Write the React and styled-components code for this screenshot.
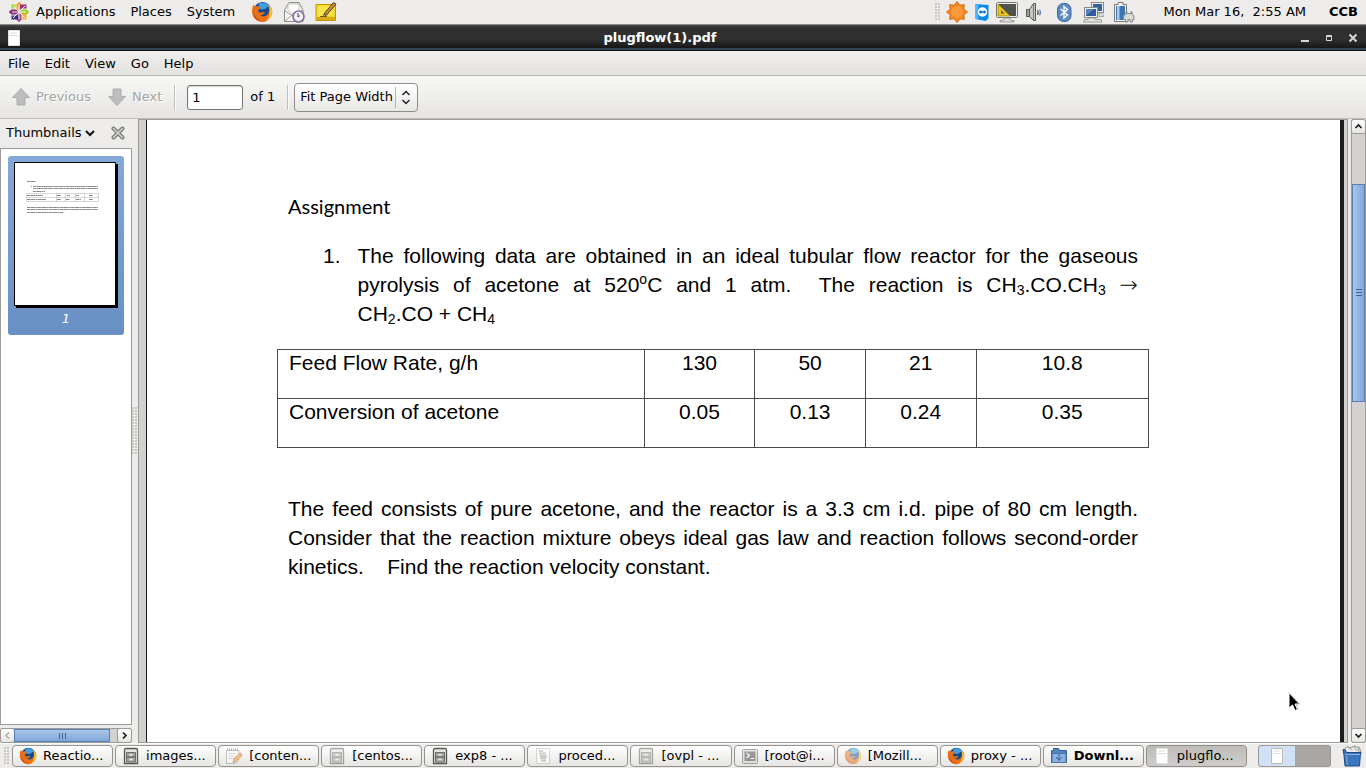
import React from "react";
import styled, { createGlobalStyle, css } from "styled-components";

const GlobalStyle = createGlobalStyle`
  *, *::before, *::after { box-sizing: border-box; }
  body {
    margin: 0;
    background: #edeceb;
    color: #000;
    font: 13px/16px "DejaVu Sans", sans-serif;
  }
  button, input, select { font: inherit; color: inherit; }
  svg { display: block; flex: none; }
`;

const Desktop = styled.div`
  position: relative;
  display: flex;
  flex-direction: column;
  height: 100vh;
  overflow: hidden;
`;

const plainButton = css`
  margin: 0;
  padding: 0;
  border: 0;
  background: none;
  white-space: nowrap;
`;

/* ---------- top panel ---------- */
const Panel = styled.header`
  display: flex;
  align-items: center;
  height: 25px;
  padding: 0 8px;
  background: #edeceb;
  border-bottom: 1px solid #8b8a86;
`;
const PanelMenu = styled.nav`
  display: flex;
  align-items: center;
  gap: 15px;
  margin: 0 16px 0 6px;
`;
const PanelButton = styled.button`
  ${plainButton}
`;
const IconRow = styled.div`
  display: flex;
  align-items: center;
  gap: ${(p) => p.$gap}px;
`;
const Tray = styled(IconRow)`
  margin-left: auto;
`;
const Clock = styled.time`
  margin: 0 23px 0 28px;
  white-space: pre;
`;
const UserName = styled.strong`
  font-weight: bold;
`;
const Grip = styled.span`
  flex: none;
  width: 6px;
  height: 18px;
  background-image: radial-gradient(circle at 1px 1px, #bcbab7 0, #bcbab7 1px, transparent 1px);
  background-size: 3px 3px;
  opacity: 0.75;
`;

/* ---------- window frame ---------- */
const TitleBar = styled.div`
  display: flex;
  align-items: center;
  height: 26px;
  padding: 0 6px 0 8px;
  background: linear-gradient(#4a4a49 0, #303030 3px, #303030 14px, #171717 23px, #56708f 24px, #0f1114 25px);
  color: #fff;
`;
const Title = styled.h1`
  flex: 1;
  margin: 0;
  font-size: 13px;
  line-height: 16px;
  text-align: center;
`;
const WindowButtons = styled.div`
  display: flex;
  gap: 12px;
`;
const WindowButton = styled.button`
  ${plainButton}
  width: 12px;
  height: 12px;
`;
const MenuBar = styled.nav`
  display: flex;
  align-items: center;
  gap: 15px;
  height: 25px;
  padding: 2px 8px 0;
  background: linear-gradient(#efeeed, #e3e2e0);
  border-bottom: 1px solid #bab8b5;
`;
const ToolBar = styled.div`
  display: flex;
  align-items: center;
  height: 43px;
  padding: 0 11px;
  background: linear-gradient(#f8f8f7, #e5e4e2);
  border-bottom: 1px solid #bfbdba;
`;
const NavButtons = styled.div`
  display: flex;
  gap: 16px;
  margin-right: 12px;
`;
const NavButton = styled.button`
  ${plainButton}
  display: flex;
  align-items: center;
  gap: 5px;
  color: #a5a4a1;
  text-shadow: 1px 1px 0 #fff;
`;
const Divider = styled.span`
  width: 2px;
  height: 25px;
  border-left: 1px solid #c2c0bd;
  border-right: 1px solid #fafafa;
`;
const PageField = styled.label`
  display: flex;
  align-items: center;
  gap: 7px;
  margin: 0 12px 0 11px;
`;
const PageInput = styled.input`
  width: 56px;
  height: 25px;
  padding: 0 4px;
  border: 1px solid #75736f;
  border-radius: 3px;
  background: #fff;
  box-shadow: inset 0 1px 1px #d4d3d1;
`;
const ZoomBox = styled.div`
  position: relative;
  margin-left: 5px;
`;
const ZoomSelect = styled.select`
  appearance: none;
  width: 124px;
  height: 29px;
  padding: 0 24px 0 5px;
  border: 1px solid #8f8d89;
  border-radius: 4px;
  background: linear-gradient(#fff, #e8e7e5);
`;
const ZoomArrows = styled.svg`
  position: absolute;
  top: 4px;
  right: 5px;
  pointer-events: none;
`;

/* ---------- viewer ---------- */
const Viewer = styled.main`
  display: flex;
  flex: 1;
  min-height: 0;
`;
const SideBar = styled.aside`
  display: flex;
  flex-direction: column;
  width: 132px;
`;
const SideHeader = styled.div`
  display: flex;
  align-items: center;
  justify-content: space-between;
  height: 29px;
  padding: 0 7px 2px 6px;
`;
const SideTitle = styled.button`
  ${plainButton}
  display: flex;
  align-items: center;
  gap: 3px;
`;
const CloseButton = styled.button`
  ${plainButton}
`;
const ThumbList = styled.div`
  flex: 1;
  padding: 7px;
  border: 1px solid #9d9b98;
  background: #fff;
`;
const Thumb = styled.button`
  ${plainButton}
  display: flex;
  flex-direction: column;
  align-items: center;
  gap: 3px;
  width: 100%;
  padding: 6px 6px 8px;
  border-radius: 3px;
  background: linear-gradient(#84a8d8, #6890c4);
  color: #fff;
  font-style: italic;
`;
const Splitter = styled.div`
  display: flex;
  align-items: center;
  width: 6px;
`;
const SplitterGrip = styled(Grip)`
  height: 48px;
`;

const ScrollTrack = styled.div`
  display: flex;
  flex-direction: ${(p) => (p.$vertical ? "column" : "row")};
  ${(p) => (p.$vertical ? "width: 15px;" : "height: 15px; margin-top: 3px;")}
  border: 1px solid #9d9b98;
  border-radius: 3px;
  background: #d3d2d0;
`;
const ScrollArrow = styled.button`
  ${plainButton}
  display: flex;
  flex: none;
  align-items: center;
  justify-content: center;
  width: 13px;
  height: 13px;
  border-radius: 2px;
  background: linear-gradient(#fff, #e6e5e3);
  box-shadow: 0 0 0 1px #9d9b98;
`;
const ScrollThumb = styled.div`
  display: flex;
  align-items: center;
  justify-content: center;
  flex: 0 0 ${(p) => p.$size};
  border: 1px solid #5a7fb2;
  background: linear-gradient(${(p) => (p.$vertical ? "to right" : "to bottom")}, #a9c6ea, #80a6d8);
`;
const ScrollGap = styled.div`
  flex: ${(p) => p.$grow} 0 0;
`;

const DocFrame = styled.section`
  display: flex;
  flex: 1;
  margin-right: 3px;
  padding: 0 3px 0 7px;
  border: 1px solid #9d9b98;
  background: #d2d1cf;
`;
const Page = styled.article`
  flex: 1;
  padding: 74px 202px 0 141px;
  border-left: 1px solid #1a1c1d;
  border-right: 4px solid #1a1c1d;
  background: #fff;
  font: 21px/29px "Liberation Sans", Arial, sans-serif;
  overflow: hidden;
`;
const Heading = styled.h2`
  margin: 0 0 23px;
  font: 20px/24px Lato, sans-serif;
`;
const Questions = styled.ol`
  margin: 0 0 21px;
  padding: 0;
  list-style: none;
`;
const Question = styled.li`
  display: flex;
  gap: 17px;
  padding-left: 35px;
`;
const Text = styled.p`
  flex: 1;
  margin: 0;
`;
const Line = styled.span`
  display: block;
  white-space: nowrap;
  text-align: justify;
  text-align-last: ${(p) => (p.$last ? "left" : "justify")};
`;
const Sub = styled.sub`
  font-size: 14px;
  line-height: 0;
  vertical-align: -3px;
`;
const Sup = styled.sup`
  font-size: 14px;
  line-height: 0;
  vertical-align: 8px;
`;
const Arrow = styled.span`
  font-family: "DejaVu Sans", sans-serif;
  font-size: 22px;
  font-weight: 200;
  line-height: 0;
`;
const DataTable = styled.table`
  width: calc(100% + 22px);
  margin: 0 -11px 46px;
  border-collapse: collapse;
  table-layout: fixed;
  line-height: 26px;
`;
const Col = styled.col`
  width: ${(p) => p.$width};
`;
const cell = css`
  height: 49px;
  padding: 0 11px;
  border: 1px solid #4a4a4a;
  vertical-align: top;
  font-weight: normal;
`;
const RowHead = styled.th`
  ${cell}
  text-align: left;
`;
const Cell = styled.td`
  ${cell}
  text-align: center;
`;

/* ---------- bottom panel ---------- */
const TaskBar = styled.footer`
  display: flex;
  align-items: center;
  height: 25px;
  padding: 0 4px;
  background: #edeceb;
  border-top: 1px solid #fafafa;
`;
const Tasks = styled.div`
  display: flex;
  flex: 1;
  gap: 2px;
  margin: 0 11px 0 2px;
`;
const Task = styled.button`
  ${plainButton}
  display: flex;
  flex: 1 1 0;
  align-items: center;
  gap: 6px;
  min-width: 0;
  height: 22px;
  padding: 0 6px;
  border: 1px solid ${(p) => (p.$active ? "#8f8d89" : "#95938f")};
  border-radius: 4px;
  background: ${(p) => (p.$active ? "linear-gradient(#bfbdba, #cfcdcb)" : "linear-gradient(#fff, #e6e5e3)")};
  font-weight: ${(p) => (p.$bold ? "bold" : "normal")};
  overflow: hidden;
  svg { opacity: ${(p) => (p.$minimized ? 0.5 : 1)}; }
`;
const Switcher = styled.div`
  display: flex;
  width: 73px;
  height: 22px;
  margin-right: 11px;
  border: 1px solid #9b9894;
  border-radius: 3px;
  background: #a9a5a2;
  overflow: hidden;
`;
const Workspace = styled.button`
  ${plainButton}
  display: flex;
  flex: 1;
  align-items: center;
  justify-content: center;
  background: ${(p) => (p.$active ? "#cfe0f7" : "#a9a5a2")};
`;
const Pointer = styled.svg`
  position: absolute;
  right: 66px;
  bottom: 56px;
  pointer-events: none;
`;

/* ---------- icons ---------- */
function CentosIcon() {
  const arms = [0, 90, 180, 270];
  const colors = ["#9ccd2a", "#932279", "#efa724", "#262577"];
  const tips = ["#efa724", "#9ccd2a", "#a14f8c", "#8a2a7c"];
  return (
    <svg width="22" height="22" viewBox="0 0 22 22">
      {arms.map((a, i) => (
        <g key={a} transform={`rotate(${a} 11 11)`}>
          <path d="M3.500 3.500h6.500v6.500H3.500z" fill={colors[i]} opacity=".9" />
          <path d="M11 0l3 3.500v5L11 11 8 8.500v-5z" fill={tips[i]} stroke="#f6f0ee" strokeWidth="1" />
          <path d="M5 5L9.500 9.500M11 4v6" stroke="#fff" strokeWidth=".9" />
        </g>
      ))}
    </svg>
  );
}
function FirefoxIcon({ size = 22 }) {
  return (
    <svg width={size} height={size} viewBox="0 0 22 22">
      <circle cx="11.500" cy="10" r="9" fill="#174a8c" />
      <path d="M8 2.500c4-2 9-.5 11 4-2-1-3-.5-4 1-2 1-3 0-4 1.500-2-1-4-3-3-6.500z" fill="#3f9fe0" />
      <path d="M2.500 3.500C3 5 4 5.500 5.500 5.300c2-.3 3.500.2 4.300 1.700-1 1-2.800 1.300-2.600 3 .6 1.500 2.300 2 4 1.300 1.500-.6 2.500-.2 2.800.7-1.500.5-2 2.500-4.700 2.500 3.500 2 8 .5 9-4.500.4-2 0-4-.8-6C21 6 22 10 20.800 13.500 19 18.500 15 21.500 10.500 21 5 20.500 1 16 1 10.500 1 8 1.500 5.500 2.500 3.500z" fill="#e8701a" />
      <path d="M17.500 4c3.500 3 4.500 7 3 10.500-1 2.500-3 4.500-5.500 5.500 3.500-4 4.500-9.500 2.500-16z" fill="#fbc02c" />
      <path d="M2 11c1 4 4 7.500 8.500 8.500-4.500.5-8-3-8.500-8.500z" fill="#c03a12" />
    </svg>
  );
}
function MailIcon() {
  return (
    <svg width="22" height="22" viewBox="0 0 22 22">
      <path d="M1.500 9L6 1.500h10L20 9v11.500H1.500z" fill="#f4f4f2" stroke="#8b8d88" />
      <path d="M5 3h11v7l-5 4-6-5z" fill="#fff" stroke="#b8b9b5" strokeWidth=".8" />
      <path d="M1.500 9.500L10 15l9.500-6M2 20l7-6" fill="none" stroke="#9a9c97" />
      <circle cx="15.500" cy="15.500" r="5.500" fill="#f2eef5" stroke="#85709a" strokeWidth="1.700" />
      <path d="M15 12v4l2-1.500" fill="none" stroke="#5a4a6a" />
    </svg>
  );
}
function NoteIcon() {
  return (
    <svg width="22" height="22" viewBox="0 0 22 22">
      <path d="M1 3.500h19.500v16H1z" fill="#f4d927" stroke="#b99a05" />
      <path d="M2 16h18v3H2z" fill="#d9a90c" />
      <path d="M3 5h15v10H3z" fill="#f9e658" opacity=".7" />
      <path d="M9 13L18.500 1.500l2.500 1.700L11.500 14z" fill="#c98d3c" stroke="#513c19" />
      <path d="M9 13l-.8 2.500 3.300-1.500z" fill="#fff" stroke="#333" strokeWidth=".7" />
      <path d="M5 15.500h7" stroke="#6c5b0e" />
    </svg>
  );
}
function SunIcon() {
  return (
    <svg width="22" height="22" viewBox="0 0 22 22">
      <path d="M11 .5l2.700 3.700L18.300 3.700 17.800 8.300 21.500 11l-3.700 2.700.5 4.600-4.600-.5L11 21.500l-2.700-3.700-4.600.5.5-4.600L.5 11l3.700-2.700-.5-4.600 4.600.5z" fill="#f58a23" stroke="#d5690d" strokeLinejoin="round" />
      <circle cx="11" cy="10.500" r="5.500" fill="#fba348" opacity=".7" />
    </svg>
  );
}
function RemoteIcon() {
  return (
    <svg width="22" height="22" viewBox="0 0 22 22">
      <path d="M4.500 3l13 1v13.500l-3 2.500-10-2z" fill="#0b8bec" />
      <path d="M4.500 3l3 .3v15.200l-3-.5z" fill="#47b6ff" />
      <circle cx="11.500" cy="11" r="4.700" fill="#fff" />
      <path d="M7.500 11l2.700-2v1.300h2.600V9l2.700 2-2.700 2v-1.300h-2.600V13z" fill="#0b6fc8" />
    </svg>
  );
}
function DisplayIcon() {
  return (
    <svg width="22" height="22" viewBox="0 0 22 22">
      <rect x=".5" y="1.500" width="21" height="15" rx="1" fill="#eee" stroke="#777975" />
      <path d="M2 3h18v12H2z" fill="#51534f" />
      <path d="M2 3v12h12z" fill="#e9c61c" stroke="#a88b08" strokeWidth=".8" />
      <path d="M5 9v3.500h3.500z" fill="#51534f" />
      <path d="M8 17h6l1 2.500h3v1.500H4v-1.500h3z" fill="#dcdcda" stroke="#888a85" strokeWidth=".7" />
    </svg>
  );
}
function SpeakerIcon() {
  return (
    <svg width="22" height="22" viewBox="0 0 22 22">
      <path d="M3.500 8.500h3v7h-3zM6.500 8.500l4-6h2v17h-2l-4-4z" fill="#c7c8c4" stroke="#555753" strokeLinejoin="round" />
      <path d="M10.500 3v16M5 9v6" stroke="#777975" />
      <path d="M14.500 9q1.500 2.500 0 5" fill="none" stroke="#555753" strokeWidth="1.200" />
      <path d="M16.500 8.500q2 3 0 6" fill="none" stroke="#5f88bd" strokeWidth="1.200" />
    </svg>
  );
}
function BluetoothIcon() {
  return (
    <svg width="22" height="22" viewBox="0 0 22 22">
      <rect x="4.500" y="2.500" width="13.500" height="18" rx="6" fill="#5c8ac4" stroke="#3a6399" />
      <path d="M7.500 8l7 6-3.500 3V5.500l3.500 3-7 6" fill="none" stroke="#fff" strokeWidth="1.400" />
    </svg>
  );
}
function NetworkIcon() {
  return (
    <svg width="22" height="22" viewBox="0 0 22 22">
      <rect x="8.500" y="1.500" width="12" height="10" fill="#eee" stroke="#888a85" />
      <path d="M10 3h9v7h-9z" fill="#36639f" />
      <path d="M16 12h3l2 3.500h-5z" fill="#ddd" stroke="#999b96" strokeWidth=".8" />
      <rect x="1.500" y="6.500" width="13" height="10" fill="#eee" stroke="#888a85" />
      <path d="M3 8h10v7H3z" fill="#2e5c9a" />
      <path d="M3 8h8l-7 6H3z" fill="#6f9bd0" opacity=".6" />
      <path d="M5 17h7v1.500h6l1 2.500H.5l1-2.500H5z" fill="#e5e5e3" stroke="#888a85" strokeWidth=".8" />
    </svg>
  );
}
function BatteryIcon() {
  return (
    <svg width="22" height="22" viewBox="0 0 22 22">
      <path d="M1.500 3.500H5v-2h5v2h3.500v17h-12z" fill="#f2f2f0" stroke="#777975" />
      <path d="M3 5h9v14H3z" fill="#3f74b5" />
      <path d="M4 5h2.500v14H4z" fill="#a9c9ee" />
      <path d="M13.500 10.500v4M18.500 10.500v4" stroke="#888a85" strokeWidth="2" />
      <path d="M10.500 17q0-4.500 4-4.500h2.500q4 0 4 4.500v1.500h-1.500v2.500h-2.500v-2.500h-2v2.500h-2.500v-2.500h-2z" fill="#d9d9d6" stroke="#888a85" />
    </svg>
  );
}
function PageIcon({ width = 12, height = 16, edge = "#e2e2e0" }) {
  return (
    <svg width={width} height={height} viewBox="0 0 12 16">
      <path d="M.5.5h11v15H.5z" fill="#fff" stroke={edge} />
      <path d="M2 3h7M2 5.500h8" stroke="#deddd9" />
    </svg>
  );
}
function CabinetIcon() {
  return (
    <svg width="18" height="18" viewBox="0 0 18 18">
      <path d="M4 1.500h10q1.500 0 1.500 1.500v13.500h-13V3q0-1.500 1.500-1.500z" fill="#e3e4e0" stroke="#555753" strokeWidth="1.300" />
      <path d="M4.500 5.500h9v9.500h-9z" fill="#a4a6a1" stroke="#6b6d69" />
      <path d="M4.500 10h9" stroke="#555753" />
      <path d="M7.500 8h3M7.500 12.500h3" stroke="#f4f4f2" strokeWidth="1.400" />
    </svg>
  );
}
function NotepadIcon() {
  return (
    <svg width="18" height="18" viewBox="0 0 18 18">
      <path d="M1.500 3.500h12.500l-1 11-3 2h-8.500z" fill="#fff" stroke="#8e908b" />
      <path d="M2 2.500h12" stroke="#666" strokeWidth="2" strokeDasharray="1 1" />
      <path d="M3.500 6.500h8M3.500 9h6M3.500 11.500h5" stroke="#b0b2ad" />
      <path d="M8 15.500l1-4 6-5.500 2 2.500-6 6z" fill="#f38a12" stroke="#a5500b" strokeWidth=".9" />
      <path d="M14 6.500l1.500-1.300 2 2.300-1.500 1.500z" fill="#e26d62" />
    </svg>
  );
}
function TextFileIcon() {
  return (
    <svg width="18" height="18" viewBox="0 0 18 18">
      <path d="M2.500 1.500h13v15h-13z" fill="#fff" stroke="#b5b6b2" />
      <path d="M5 4h4M5 6.500h7M6 9h7M6 11h6M7 13.500h5" stroke="#a3a5a0" strokeWidth="1.800" />
    </svg>
  );
}
function TerminalIcon() {
  return (
    <svg width="18" height="18" viewBox="0 0 18 18">
      <rect x="1.500" y="2.500" width="15" height="14" rx="1" fill="#d5d6d2" stroke="#555753" />
      <path d="M3.500 4.500h11v9.500h-11z" fill="#3a3c39" />
      <path d="M5.500 6l3 2.500-3 2.500M9.500 11.500h3.500" fill="none" stroke="#fff" strokeWidth="1.200" />
    </svg>
  );
}
function FolderIcon() {
  return (
    <svg width="18" height="18" viewBox="0 0 18 18">
      <path d="M1.500 15.500V3.500h2v-2h5l1.500 2h6.500v12z" fill="#5585c0" stroke="#34609a" />
      <path d="M2 6.500h14v9H2z" fill="#8db2e0" stroke="#4473b0" />
      <path d="M9 7.500v5M6.500 10.500L9 13l2.500-2.500" fill="none" stroke="#2d5a96" strokeWidth="1.300" strokeDasharray="2 1" />
    </svg>
  );
}
function TrashIcon() {
  return (
    <svg width="20" height="22" viewBox="0 0 20 22">
      <path d="M2 5l3-3.500L9 3l3-2 5.500 1.500L19 8H3z" fill="#eceded" stroke="#777975" strokeWidth=".8" />
      <path d="M7 2.500l3 3M12 2l3 4M16 3l1 4" stroke="#9a9c97" />
      <path d="M1 4.500h2l1.500 3H19l-.7 3-.8 10.500H3L2 10z" fill="#3a76bd" stroke="#1f4a83" />
      <path d="M3 9.500h15" stroke="#8cb5e6" />
      <path d="M4.500 11l.7 9" stroke="#6b9dd8" strokeWidth="1.500" />
    </svg>
  );
}
function NavArrow({ down }) {
  return (
    <svg width="20" height="20" viewBox="0 0 20 20">
      <g transform={down ? "rotate(180 10 10)" : undefined}>
        <path d="M10 1.500l8.500 9h-4.500v7.500H6v-7.500H1.500z" fill="#bcbdbc" stroke="#adaead" strokeLinejoin="round" />
      </g>
    </svg>
  );
}
function Chevron({ turn = 0, color = "#1c1c1c" }) {
  return (
    <svg width="9" height="9" viewBox="0 0 9 9">
      <path d="M1.500 6l3-3 3 3" fill="none" stroke={color} strokeWidth="1.700" transform={`rotate(${turn} 4.500 4.500)`} />
    </svg>
  );
}
function ThumbPage() {
  return (
    <svg width="104" height="146" viewBox="0 0 104 146">
      <path d="M2 2h102v144H2z" fill="#000" />
      <path d="M.5.500h101v143H.5z" fill="#fff" stroke="#000" />
      <g stroke="#8c8c8c" strokeWidth="1" strokeDasharray="3 .3 5 .3 2 .4">
        <path d="M13 19.500h9M17 24.500h1M19 24.500h65M19 26.500h65M19 29.500h12M13 33.500h16M43 33.500h4M53 33.500h3M62 33.500h3M75 33.500h4M13 37.500h19M43 37.500h4M52 37.500h4M62 37.500h5M75 37.500h4M13 45.500h71M13 47.500h71M13 50.500h36" />
      </g>
      <path d="M12.500 31.500h72v8h-72zM12.500 35.500h72M42.500 31.500v8M51.500 31.500v8M61.500 31.500v8M70.500 31.500v8" fill="none" stroke="#bbb" strokeWidth=".6" />
    </svg>
  );
}

const rows = [
  { name: "Feed Flow Rate, g/h", values: ["130", "50", "21", "10.8"] },
  { name: "Conversion of acetone", values: ["0.05", "0.13", "0.24", "0.35"] },
];
const columns = ["42.1%", "12.7%", "12.7%", "12.7%", "19.8%"];

const tasks = [
  { label: "Reactio...", icon: <FirefoxIcon size={18} /> },
  { label: "images...", icon: <CabinetIcon /> },
  { label: "[conten...", icon: <NotepadIcon />, minimized: true },
  { label: "[centos...", icon: <CabinetIcon />, minimized: true },
  { label: "exp8 - ...", icon: <CabinetIcon /> },
  { label: "proced...", icon: <TextFileIcon />, minimized: true },
  { label: "[ovpl - ...", icon: <CabinetIcon />, minimized: true },
  { label: "[root@i...", icon: <TerminalIcon />, minimized: true },
  { label: "[Mozill...", icon: <FirefoxIcon size={18} />, minimized: true },
  { label: "proxy - ...", icon: <FirefoxIcon size={18} /> },
  { label: "Downl...", icon: <FolderIcon />, bold: true },
  { label: "plugflo...", icon: <PageIcon width={18} />, active: true },
];

export default function App() {
  return (
    <Desktop>
      <GlobalStyle />
      <Panel>
        <CentosIcon />
        <PanelMenu>
          {["Applications", "Places", "System"].map((m) => (
            <PanelButton key={m}>{m}</PanelButton>
          ))}
        </PanelMenu>
        <IconRow $gap={10}>
          <FirefoxIcon />
          <MailIcon />
          <NoteIcon />
        </IconRow>
        <Tray $gap={5}>
          <Grip />
          <IconRow $gap={3}>
            <SunIcon />
            <RemoteIcon />
            <DisplayIcon />
          </IconRow>
          <IconRow $gap={8}>
            <SpeakerIcon />
            <BluetoothIcon />
            <NetworkIcon />
            <BatteryIcon />
          </IconRow>
        </Tray>
        <Clock>Mon Mar 16,  2:55 AM</Clock>
        <UserName>CCB</UserName>
      </Panel>

      <TitleBar>
        <PageIcon />
        <Title>plugflow(1).pdf</Title>
        <WindowButtons>
          <WindowButton aria-label="Minimize">
            <svg width="12" height="12" viewBox="0 0 12 12"><path d="M1 9h8" stroke="#d6d6d4" strokeWidth="2" /></svg>
          </WindowButton>
          <WindowButton aria-label="Maximize">
            <svg width="12" height="12" viewBox="0 0 12 12"><path d="M2.500 3.500h5v5h-5zM2 4.500h6" fill="none" stroke="#d6d6d4" /></svg>
          </WindowButton>
          <WindowButton aria-label="Close">
            <svg width="12" height="12" viewBox="0 0 12 12"><path d="M1.500 2.500l7 7M8.500 2.500l-7 7" stroke="#d6d6d4" strokeWidth="2" /></svg>
          </WindowButton>
        </WindowButtons>
      </TitleBar>

      <MenuBar>
        {["File", "Edit", "View", "Go", "Help"].map((m) => (
          <PanelButton key={m}>{m}</PanelButton>
        ))}
      </MenuBar>

      <ToolBar>
        <NavButtons>
          <NavButton disabled><NavArrow />Previous</NavButton>
          <NavButton disabled><NavArrow down />Next</NavButton>
        </NavButtons>
        <Divider />
        <PageField>
          <PageInput type="text" defaultValue="1" aria-label="Page" />
          of 1
        </PageField>
        <Divider />
        <ZoomBox>
          <ZoomSelect aria-label="Zoom" defaultValue="width">
            <option value="width">Fit Page Width</option>
          </ZoomSelect>
          <ZoomArrows width="18" height="21" viewBox="0 0 18 21">
            <path d="M.5 0v21" stroke="#b5b3b0" />
            <path d="M7.500 8L11 4.500 14.500 8M7.500 13l3.500 3.500 3.500-3.500" fill="none" stroke="#1c1c1c" strokeWidth="1.400" />
          </ZoomArrows>
        </ZoomBox>
      </ToolBar>

      <Viewer>
        <SideBar>
          <SideHeader>
            <SideTitle>
              Thumbnails
              <svg width="10" height="8" viewBox="0 0 10 8"><path d="M1 2l4 4 4-4" fill="none" stroke="#111" strokeWidth="2" /></svg>
            </SideTitle>
            <CloseButton aria-label="Close side pane">
              <svg width="14" height="14" viewBox="0 0 14 14">
                <path d="M2.500 2.500l9 9M11.500 2.500l-9 9" stroke="#7b7d78" strokeWidth="4" strokeLinecap="round" />
                <path d="M2.500 2.500l9 9M11.500 2.500l-9 9" stroke="#d0d1ce" strokeWidth="1.600" strokeLinecap="round" />
              </svg>
            </CloseButton>
          </SideHeader>
          <ThumbList>
            <Thumb>
              <ThumbPage />
              1
            </Thumb>
          </ThumbList>
          <ScrollTrack>
            <ScrollArrow aria-label="Scroll left"><Chevron turn={-90} color="#b0aeab" /></ScrollArrow>
            <ScrollThumb $size="74%">
              <svg width="9" height="6" viewBox="0 0 9 6"><path d="M1.500 0v6M4.500 0v6M7.500 0v6" stroke="#426496" /></svg>
            </ScrollThumb>
            <ScrollGap $grow={1} />
            <ScrollArrow aria-label="Scroll right"><Chevron turn={90} /></ScrollArrow>
          </ScrollTrack>
        </SideBar>
        <Splitter><SplitterGrip /></Splitter>

        <DocFrame>
          <Page>
            <Heading>Assignment</Heading>
            <Questions>
              <Question>
                <span>1.</span>
                <Text>
                  <Line>The following data are obtained in an ideal tubular flow reactor for the gaseous</Line>
                  <Line>
                    pyrolysis of acetone at 520<Sup>o</Sup>C and 1 atm.{"\u00a0 "}The reaction is CH<Sub>3</Sub>.CO.CH
                    <Sub>3</Sub> <Arrow>→</Arrow>
                  </Line>
                  <Line $last>CH<Sub>2</Sub>.CO + CH<Sub>4</Sub></Line>
                </Text>
              </Question>
            </Questions>
            <DataTable>
              <colgroup>
                {columns.map((w, i) => (
                  <Col key={i} $width={w} />
                ))}
              </colgroup>
              <tbody>
                {rows.map((r) => (
                  <tr key={r.name}>
                    <RowHead scope="row">{r.name}</RowHead>
                    {r.values.map((v) => (
                      <Cell key={v}>{v}</Cell>
                    ))}
                  </tr>
                ))}
              </tbody>
            </DataTable>
            <Text>
              <Line>The feed consists of pure acetone, and the reactor is a 3.3 cm i.d. pipe of 80 cm length.</Line>
              <Line>Consider that the reaction mixture obeys ideal gas law and reaction follows second-order</Line>
              <Line $last>kinetics.{"\u00a0\u00a0\u00a0 "}Find the reaction velocity constant.</Line>
            </Text>
          </Page>
        </DocFrame>
        <ScrollTrack $vertical>
          <ScrollArrow aria-label="Scroll up"><Chevron /></ScrollArrow>
          <ScrollGap $grow={51} />
          <ScrollThumb $vertical $size="35%">
            <svg width="6" height="9" viewBox="0 0 6 9"><path d="M0 1.500h6M0 4.500h6M0 7.500h6" stroke="#426496" /></svg>
          </ScrollThumb>
          <ScrollGap $grow={328} />
          <ScrollArrow aria-label="Scroll down"><Chevron turn={180} /></ScrollArrow>
        </ScrollTrack>
      </Viewer>

      <TaskBar>
        <Grip />
        <Tasks>
          {tasks.map((t) => (
            <Task key={t.label} $minimized={t.minimized} $active={t.active} $bold={t.bold}>
              {t.icon}
              {t.label}
            </Task>
          ))}
        </Tasks>
        <Switcher>
          <Workspace $active aria-label="Workspace 1"><PageIcon edge="#b9b9b6" /></Workspace>
          <Workspace aria-label="Workspace 2" />
        </Switcher>
        <TrashIcon />
      </TaskBar>

      <Pointer width="12" height="20" viewBox="0 0 12 20">
        <path d="M1 1v15l3.500-3 2.500 5.500 2.500-1L7 12h4.500z" fill="#000" stroke="#fff" strokeWidth="1" />
        <path d="M.5 0l11 12H8l2.500 5.500" fill="none" stroke="#999" strokeWidth=".6" />
      </Pointer>
    </Desktop>
  );
}
